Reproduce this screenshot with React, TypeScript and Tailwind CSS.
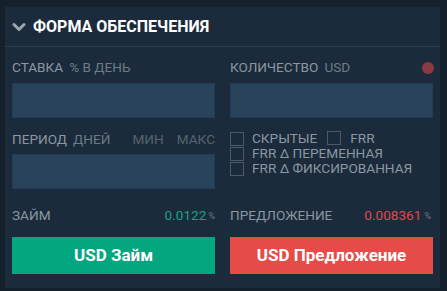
import React from 'react';

const Checkbox: React.FC = () => (
  <span className="inline-block w-[14px] h-[14px] border border-[#4b5a68] bg-[#1b2b3b] shrink-0" />
);

const App: React.FC = () => {
  return (
    <div className="w-[447px] h-[291px] bg-[#14212d] pt-[7px] pl-[5px]" style={{ fontFamily: 'Roboto, "Liberation Sans", sans-serif' }}>
      <div className="w-[435px] h-[281px] bg-[#1b2b3b]">
        {/* header */}
        <div className="h-[40px] border-b border-[#2c3c4b] flex items-center pl-[7px]">
          <svg width="14" height="10" viewBox="0 0 14 10" className="mr-[7px]">
            <path d="M2 2.5 L7 7.5 L12 2.5" stroke="#9aa5ae" strokeWidth="3" fill="none" strokeLinecap="round" strokeLinejoin="round" />
          </svg>
          <span className="text-white text-[16px] font-bold leading-none">ФОРМА ОБЕСПЕЧЕНИЯ</span>
        </div>

        <div className="px-[7px] pt-[14px]">
          {/* row 1 */}
          <div className="grid grid-cols-2 gap-x-[15px]">
            <div>
              <div className="h-[14px] flex items-center text-[13.6px] leading-none uppercase">
                <span className="text-[#8b97a1]">Ставка</span>
                <span className="text-[#6c7a86] ml-[6px]">% в день</span>
              </div>
              <div className="mt-[8px] h-[35px] bg-[#29435a] border border-[#1f3d58]" />
            </div>
            <div>
              <div className="h-[14px] flex items-center text-[13.6px] leading-none uppercase">
                <span className="text-[#8b97a1]">Количество</span>
                <span className="text-[#6c7a86] ml-[6px]">USD</span>
                <span className="ml-auto mr-[-1px] w-[12px] h-[12px] rounded-full bg-[#8a3a40]" />
              </div>
              <div className="mt-[8px] h-[35px] bg-[#29435a] border border-[#1f3d58]" />
            </div>
          </div>

          {/* row 2 */}
          <div className="grid grid-cols-2 gap-x-[15px] mt-[15px]">
            <div>
              <div className="h-[14px] flex items-center text-[13.6px] leading-none uppercase">
                <span className="text-[#8b97a1]">Период</span>
                <span className="text-[#6c7a86] ml-[6px]">дней</span>
                <span className="text-[#56646f] ml-auto">мин</span>
                <span className="text-[#56646f] ml-[13px]">макс</span>
              </div>
              <div className="mt-[7px] h-[35px] bg-[#29435a] border border-[#1f3d58]" />
            </div>
            <div className="flex flex-col gap-[1px] text-[13.6px] leading-none uppercase text-[#8b97a1] -mt-[1px]">
              <div className="flex items-center h-[14px]">
                <Checkbox />
                <span className="ml-[8px]">Скрытые</span>
                <span className="ml-[10px]"><Checkbox /></span>
                <span className="ml-[9px]">FRR</span>
              </div>
              <div className="flex items-center h-[14px]">
                <Checkbox />
                <span className="ml-[8px]">FRR Δ переменная</span>
              </div>
              <div className="flex items-center h-[14px]">
                <Checkbox />
                <span className="ml-[8px]">FRR Δ фиксированная</span>
              </div>
            </div>
          </div>

          {/* rates */}
          <div className="grid grid-cols-2 gap-x-[15px] mt-[20px]">
            <div className="h-[14px] flex items-center leading-none">
              <span className="text-[13.6px] uppercase text-[#8b97a1]">Займ</span>
              <span className="ml-auto text-[13.6px] text-[#16a383]">0.0122</span>
              <span className="ml-[2px] text-[9px] text-[#6c7a86]">%</span>
            </div>
            <div className="h-[14px] flex items-center leading-none">
              <span className="text-[13.6px] uppercase text-[#8b97a1]">Предложение</span>
              <span className="ml-auto text-[13.6px] text-[#e2474b]">0.008361</span>
              <span className="ml-[3px] mr-[2px] text-[9px] text-[#6c7a86]">%</span>
            </div>
          </div>

          {/* buttons */}
          <div className="grid grid-cols-2 gap-x-[15px] mt-[14px]">
            <button className="h-[37px] bg-[#02a67f] text-white text-[17px] font-bold">USD Займ</button>
            <button className="h-[37px] bg-[#e64c47] text-white text-[17px] font-bold">USD Предложение</button>
          </div>
        </div>
      </div>
    </div>
  );
};

export default App;
